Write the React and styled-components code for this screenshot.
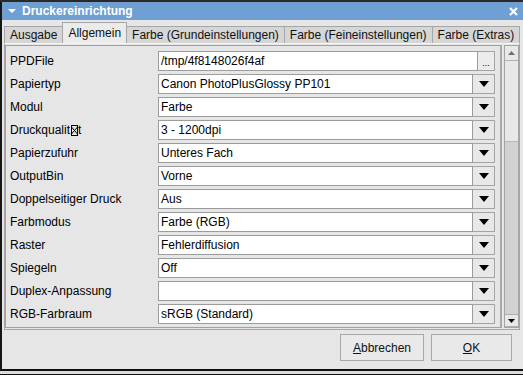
import React from "react";
import styled, { createGlobalStyle } from "styled-components";

const GlobalStyle = createGlobalStyle`
  html, body {
    margin: 0;
    padding: 0;
    background: #2b2925;
  }
  body {
    font-family: "Liberation Sans", Arial, sans-serif;
    font-size: 12px;
    color: #000;
  }
`;

const rows = [
  { label: "PPDFile", value: "/tmp/4f8148026f4af", kind: "file" },
  { label: "Papiertyp", value: "Canon PhotoPlusGlossy PP101" },
  { label: "Modul", value: "Farbe" },
  { label: "Druckqualit", tofu: true, tail: "t", value: "3 - 1200dpi" },
  { label: "Papierzufuhr", value: "Unteres Fach" },
  { label: "OutputBin", value: "Vorne" },
  { label: "Doppelseitiger Druck", value: "Aus" },
  { label: "Farbmodus", value: "Farbe (RGB)" },
  { label: "Raster", value: "Fehlerdiffusion" },
  { label: "Spiegeln", value: "Off" },
  { label: "Duplex-Anpassung", value: "" },
  { label: "RGB-Farbraum", value: "sRGB (Standard)" },
  { label: "", value: "" },
];

const tabs = [
  "Ausgabe",
  "Allgemein",
  "Farbe (Grundeinstellungen)",
  "Farbe (Feineinstellungen)",
  "Farbe (Extras)",
];

const DownArrow = ({ color = "#000", w = 10, h = 6 }) => (
  <svg width={w} height={h} viewBox={`0 0 ${w} ${h}`}>
    <polygon points={`0,0 ${w},0 ${w / 2},${h}`} fill={color} />
  </svg>
);

const UpArrow = ({ color = "#000", w = 7, h = 4 }) => (
  <svg width={w} height={h} viewBox={`0 0 ${w} ${h}`}>
    <polygon points={`0,${h} ${w},${h} ${w / 2},0`} fill={color} />
  </svg>
);

// missing-glyph box shown in place of the umlaut
const Tofu = () => (
  <TofuBox>
    <svg width="7" height="11" viewBox="0 0 7 11">
      <rect x="0.5" y="0.5" width="6" height="10" fill="none" stroke="#000" />
      <line x1="0.5" y1="2" x2="6.5" y2="9" stroke="#000" />
      <line x1="6.5" y1="2" x2="0.5" y2="9" stroke="#000" />
    </svg>
  </TofuBox>
);

const App = () => {
  return (
    <Screen>
      <GlobalStyle />
      <Window>
        <TitleBar>
          <DownArrow color="#fff" w={8} h={4} />
          <Title>Druckereinrichtung</Title>
          <Close>
            <svg width="9" height="9" viewBox="0 0 9 9">
              <path d="M1 1 L8 8 M8 1 L1 8" stroke="#fff" strokeWidth="2.2" />
            </svg>
          </Close>
        </TitleBar>
        <Body>
          <TabBar>
            {tabs.map((t) => (
              <Tab key={t} $active={t === "Allgemein"}>
                {t}
              </Tab>
            ))}
          </TabBar>
          <Pane>
            <Viewport>
              {rows.map((r, i) => (
                <Row key={i}>
                  <Label>
                    {r.label}
                    {r.tofu && <Tofu />}
                    {r.tail}
                  </Label>
                  <Field>
                    <Input>{r.value}</Input>
                    {r.kind === "file" ? (
                      <DotsButton>...</DotsButton>
                    ) : (
                      <ComboButton>
                        <DownArrow />
                      </ComboButton>
                    )}
                  </Field>
                </Row>
              ))}
            </Viewport>
            <ScrollBar>
              <ArrowButton $h={15}>
                <UpArrow color="#707070" />
              </ArrowButton>
              <Track />
              <Thumb />
              <ArrowButton $h={12}>
                <DownArrow w={7} h={4} />
              </ArrowButton>
            </ScrollBar>
          </Pane>
          <ButtonRow>
            <Button $w={84}>
              <u>A</u>bbrechen
            </Button>
            <Button $w={81}>
              <u>O</u>K
            </Button>
          </ButtonRow>
        </Body>
      </Window>
      <Footer />
    </Screen>
  );
};

export default App;

const Screen = styled.div`
  width: 523px;
  height: 375px;
  overflow: hidden;
  padding-top: 2px;
  box-sizing: border-box;
  display: flex;
  flex-direction: column;
`;

const Window = styled.div`
  width: 523px;
  height: 369px;
  box-sizing: border-box;
  border-left: 2px solid #161616;
  border-bottom: 2px solid #111;
  background: #e6e6e6;
  display: flex;
  flex-direction: column;
`;

const TitleBar = styled.div`
  height: 18px;
  flex: none;
  background: #6f9fd3;
  display: flex;
  align-items: center;
  padding-left: 6px;
  color: #fff;
`;

const Title = styled.span`
  font-weight: bold;
  font-size: 12px;
  margin-left: 6px;
  flex: 1;
`;

const Close = styled.span`
  display: flex;
  margin-right: 5px;
`;

const Body = styled.div`
  flex: 1;
  display: flex;
  flex-direction: column;
  padding: 2px 0 0 2px;
`;

const TabBar = styled.div`
  display: flex;
  align-items: flex-end;
  height: 21px;
  flex: none;
`;

const Tab = styled.div`
  box-sizing: border-box;
  height: ${(p) => (p.$active ? "21px" : "17px")};
  padding: ${(p) => (p.$active ? "3px 5px 0" : "1px 5px 0")};
  background: ${(p) => (p.$active ? "#ebebeb" : "#d6d6d6")};
  border: 1px solid #a6a6a6;
  border-bottom: none;
  margin-right: -1px;
  white-space: nowrap;
  font-size: 12px;
  line-height: 14px;
  color: #111;
`;

const Pane = styled.div`
  display: flex;
  width: 516px;
  height: 287px;
  box-sizing: border-box;
  border: 1px solid #a6a6a6;
  border-top-color: #f4f4f4;
  padding: 1px 0 1px 0;
  gap: 2px;
`;

const Viewport = styled.div`
  width: 498px;
  box-sizing: border-box;
  border: 1px solid #a0a0a0;
  border-right: 2px solid #a8a8a8;
  padding: 5px 0 0 4px;
  overflow: hidden;
  display: flex;
  flex-direction: column;
  gap: 3px;
`;

const Row = styled.div`
  display: grid;
  grid-template-columns: 148px 337px;
  height: 20px;
  flex: none;
  align-items: center;
`;

const Label = styled.div`
  display: flex;
  align-items: center;
  white-space: nowrap;
  font-size: 12px;
`;

const TofuBox = styled.span`
  display: inline-flex;
  margin: 0 0 0 1px;
`;

const Field = styled.div`
  display: flex;
  height: 20px;
`;

const Input = styled.div`
  flex: 1;
  box-sizing: border-box;
  background: #fff;
  border: 1px solid #9c9c9c;
  padding: 0 2px;
  display: flex;
  align-items: center;
  white-space: nowrap;
  overflow: hidden;
  font-size: 12px;
`;

const ComboButton = styled.div`
  width: 22px;
  box-sizing: border-box;
  border: 1px solid #a4a4a4;
  border-left: none;
  background: #e8e8e8;
  display: flex;
  align-items: center;
  justify-content: center;
`;

const DotsButton = styled.div`
  width: 17px;
  box-sizing: border-box;
  border: 1px solid #a4a4a4;
  border-left: none;
  background: #ececec;
  display: flex;
  align-items: flex-end;
  justify-content: center;
  font-size: 9px;
  line-height: 14px;
`;

const ScrollBar = styled.div`
  width: 15px;
  box-sizing: border-box;
  border: 1px solid #a4a4a4;
  background: #e8e8e8;
  display: flex;
  flex-direction: column;
`;

const ArrowButton = styled.div`
  height: ${(p) => p.$h}px;
  flex: none;
  box-sizing: border-box;
  border-bottom: 1px solid #b0b0b0;
  display: flex;
  align-items: center;
  justify-content: center;
  background: #e8e8e8;
`;

const Track = styled.div`
  height: 80px;
  flex: none;
`;

const Thumb = styled.div`
  flex: 1;
  background: #d2d2d2;
  border-top: 1px solid #b8b8b8;
  border-bottom: 1px solid #b0b0b0;
`;

const ButtonRow = styled.div`
  display: flex;
  justify-content: flex-end;
  gap: 7px;
  padding: 4px 11px 0 0;
`;

const Button = styled.div`
  width: ${(p) => p.$w}px;
  height: 27px;
  box-sizing: border-box;
  border: 1px solid #a8a8a8;
  background: #e9e9e9;
  display: flex;
  align-items: center;
  justify-content: center;
  font-size: 12px;
  color: #111;
`;

const Footer = styled.div`
  height: 3px;
  background: #dcdcdc;
  border-bottom: 1px solid #111;
`;
